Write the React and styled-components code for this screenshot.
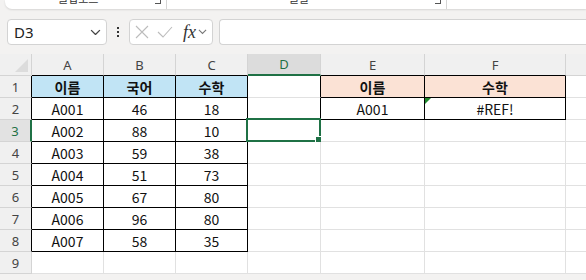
import React from "react";
import styled, { createGlobalStyle } from "styled-components";

const GREEN = "#1f7145";
const GRID = "#e1e1e1";
const HEAD_LINE = "#d4d4d4";

const Global = createGlobalStyle`
  html, body { margin: 0; padding: 0; background: #f3f2f1; }
  body { width: 586px; height: 280px; overflow: hidden; }
  * { box-sizing: border-box; }
`;

const Page = styled.div`
  width: 586px;
  height: 280px;
  overflow: hidden;
  background: #f3f2f1;
  font-family: "Noto Sans CJK KR", "Noto Sans", sans-serif;
`;

const Ribbon = styled.div`
  margin-left: 5px;
  height: 9px;
  background: #fff;
  border-radius: 0 0 0 7px;
  box-shadow: 0 1px 2px rgba(0, 0, 0, 0.12);
  overflow: hidden;
  display: flex;
`;

const Group = styled.div`
  flex: none;
  width: ${(p) => p.width}px;
  height: 9px;
  padding-left: ${(p) => p.left}px;
  position: relative;
  border-right: 1px solid #d6d6d6;
`;

const GroupLabel = styled.div`
  font-size: 11px;
  line-height: 11px;
  color: #333;
  margin-top: -7px;
  white-space: nowrap;
`;

const Launcher = styled.span`
  position: absolute;
  right: 5px;
  top: 0;
  width: 6px;
  height: 4px;
  border-right: 1px solid #555;
  border-bottom: 1px solid #555;
`;

const FormulaBar = styled.div`
  display: flex;
  align-items: center;
  height: 26px;
  margin-top: 10px;
  padding-left: 7px;
`;

const NameBox = styled.div`
  width: 100px;
  height: 26px;
  background: #fff;
  border: 1px solid #d3d3d3;
  border-radius: 4px;
  display: flex;
  align-items: center;
  justify-content: space-between;
  padding: 0 5px 0 6px;
  font-family: "Noto Sans", sans-serif;
  font-size: 15px;
  color: #222;
`;

const Dots = styled.div`
  width: 22px;
  display: flex;
  flex-direction: column;
  align-items: center;
  gap: 2px;
  span {
    width: 2px;
    height: 2px;
    background: #333;
  }
`;

const FxBox = styled.div`
  width: 84px;
  height: 26px;
  background: #fff;
  border: 1px solid #d3d3d3;
  border-radius: 4px;
  display: flex;
  align-items: center;
  padding-left: 4px;
`;

const Fx = styled.span`
  font-family: "Liberation Serif", serif;
  font-style: italic;
  font-size: 18px;
  color: #333;
  margin-left: 9px;
  margin-right: 2px;
`;

const Input = styled.div`
  flex: 1;
  height: 26px;
  margin-left: 6px;
  background: #fff;
  border: 1px solid #d3d3d3;
  border-right: none;
  border-radius: 4px 0 0 4px;
`;

const Sheet = styled.div`
  margin-top: 9px;
  display: grid;
  grid-template-columns: 32px 72px 72px 72px 73px 104px 141px 80px;
  grid-template-rows: 22px repeat(9, 22px);
  width: 646px;
  background: #fff;
`;

const Cell = styled.div`
  position: relative;
  display: flex;
  align-items: center;
  justify-content: center;
  font-size: 14px;
  font-weight: ${(p) => (p.bold ? 700 : 400)};
  color: #111;
  background: ${(p) => p.fill || "#fff"};
  border-right: 1px solid ${(p) => p.rc || GRID};
  border-bottom: 1px solid ${(p) => p.bc || GRID};
  white-space: nowrap;
`;

const ColHead = styled.div`
  display: flex;
  align-items: center;
  justify-content: center;
  font-family: "Noto Sans", sans-serif;
  font-size: 13px;
  color: ${(p) => (p.active ? GREEN : "#444")};
  background: ${(p) => (p.active ? "#dcdcdc" : "#f0f0f0")};
  border-right: 1px solid ${HEAD_LINE};
  border-bottom: ${(p) => (p.active ? `2px solid ${GREEN}` : `1px solid ${p.bc || HEAD_LINE}`)};
`;

const Corner = styled.div`
  position: relative;
  background: #f0f0f0;
  border-right: 1px solid ${HEAD_LINE};
  border-bottom: 1px solid ${HEAD_LINE};
  &::after {
    content: "";
    position: absolute;
    right: 3px;
    bottom: 3px;
    border-style: solid;
    border-width: 0 0 13px 13px;
    border-color: transparent transparent #dcdcdc transparent;
  }
`;

const RowHead = styled.div`
  display: flex;
  align-items: center;
  justify-content: center;
  font-family: "Noto Sans", sans-serif;
  font-size: 13px;
  color: ${(p) => (p.active ? GREEN : "#444")};
  background: ${(p) => (p.active ? "#e2e2e2" : "#f0f0f0")};
  border-right: ${(p) => (p.active ? `2px solid ${GREEN}` : `1px solid ${p.rc || HEAD_LINE}`)};
  border-bottom: 1px solid ${HEAD_LINE};
`;

const Selection = styled.div`
  position: absolute;
  left: -2px;
  top: -2px;
  right: -1px;
  bottom: -1px;
  border: 2px solid ${GREEN};
  pointer-events: none;
  &::after {
    content: "";
    position: absolute;
    right: -4px;
    bottom: -4px;
    width: 6px;
    height: 6px;
    background: ${GREEN};
    border: 1px solid #fff;
  }
`;

const ErrorMark = styled.span`
  position: absolute;
  left: 0;
  top: 0;
  border-style: solid;
  border-width: 6px 6px 0 0;
  border-color: #1f8a2e transparent transparent transparent;
`;

const Chevron = ({ size = 10, color = "#444" }) => (
  <svg width={size} height={size * 0.6} viewBox="0 0 10 6">
    <path d="M1 1 L5 5 L9 1" fill="none" stroke={color} strokeWidth="1.2" />
  </svg>
);

const CrossIcon = () => (
  <svg width="16" height="14" viewBox="0 0 16 14">
    <path d="M2 1 L14 13 M14 1 L2 13" stroke="#bcbcbc" strokeWidth="1.1" fill="none" />
  </svg>
);

const CheckIcon = () => (
  <svg width="18" height="14" viewBox="0 0 18 14" style={{ marginLeft: 6 }}>
    <path d="M2 7 L7 12 L16 2" stroke="#bcbcbc" strokeWidth="1.1" fill="none" />
  </svg>
);

const BLUE = "#c1e4f5";
const PEACH = "#fbe2d5";

const cols = ["A", "B", "C", "D", "E", "F", "G"];
const rowsData = {
  1: { A: "이름", B: "국어", C: "수학", E: "이름", F: "수학" },
  2: { A: "A001", B: "46", C: "18", E: "A001", F: "#REF!" },
  3: { A: "A002", B: "88", C: "10" },
  4: { A: "A003", B: "59", C: "38" },
  5: { A: "A004", B: "51", C: "73" },
  6: { A: "A005", B: "67", C: "80" },
  7: { A: "A006", B: "96", C: "80" },
  8: { A: "A007", B: "58", C: "35" },
};

// bordered ranges: [r1, c1, r2, c2], A = 1
const boxes = [
  [1, 1, 8, 3],
  [1, 5, 2, 6],
];
const inBox = (r, c) => boxes.some(([r1, c1, r2, c2]) => r >= r1 && r <= r2 && c >= c1 && c <= c2);

export default function App() {
  const rows = [];
  rows.push(<Corner key="corner" />);
  cols.forEach((l, i) => {
    const c = i + 1;
    rows.push(
      <ColHead key={`h${l}`} active={l === "D"} bc={inBox(1, c) ? "#000" : undefined}>
        {l}
      </ColHead>
    );
  });
  for (let r = 1; r <= 9; r++) {
    rows.push(
      <RowHead key={`r${r}`} active={r === 3} rc={inBox(r, 1) ? "#000" : undefined}>
        {r}
      </RowHead>
    );
    cols.forEach((l, i) => {
      const c = i + 1;
      const rc = inBox(r, c) || inBox(r, c + 1) ? "#000" : undefined;
      const bc = inBox(r, c) || inBox(r + 1, c) ? "#000" : undefined;
      let fill;
      if (r === 1 && c <= 3) fill = BLUE;
      if (r === 1 && (c === 5 || c === 6)) fill = PEACH;
      const text = rowsData[r] && rowsData[r][l];
      rows.push(
        <Cell key={`${l}${r}`} rc={rc} bc={bc} fill={fill} bold={r === 1}>
          {text}
          {l === "F" && r === 2 && <ErrorMark />}
          {l === "D" && r === 3 && <Selection />}
        </Cell>
      );
    });
  }

  return (
    <Page>
      <Global />
      <Ribbon>
        <Group width={162} left={53}>
          <GroupLabel>클립보드</GroupLabel>
          <Launcher />
        </Group>
        <Group width={280} left={122}>
          <GroupLabel>글꼴</GroupLabel>
          <Launcher />
        </Group>
      </Ribbon>
      <FormulaBar>
        <NameBox>
          <span>D3</span>
          <Chevron size={11} color="#444" />
        </NameBox>
        <Dots>
          <span />
          <span />
          <span />
        </Dots>
        <FxBox>
          <CrossIcon />
          <CheckIcon />
          <Fx>fx</Fx>
          <Chevron size={9} color="#777" />
        </FxBox>
        <Input />
      </FormulaBar>
      <Sheet>{rows}</Sheet>
    </Page>
  );
}
